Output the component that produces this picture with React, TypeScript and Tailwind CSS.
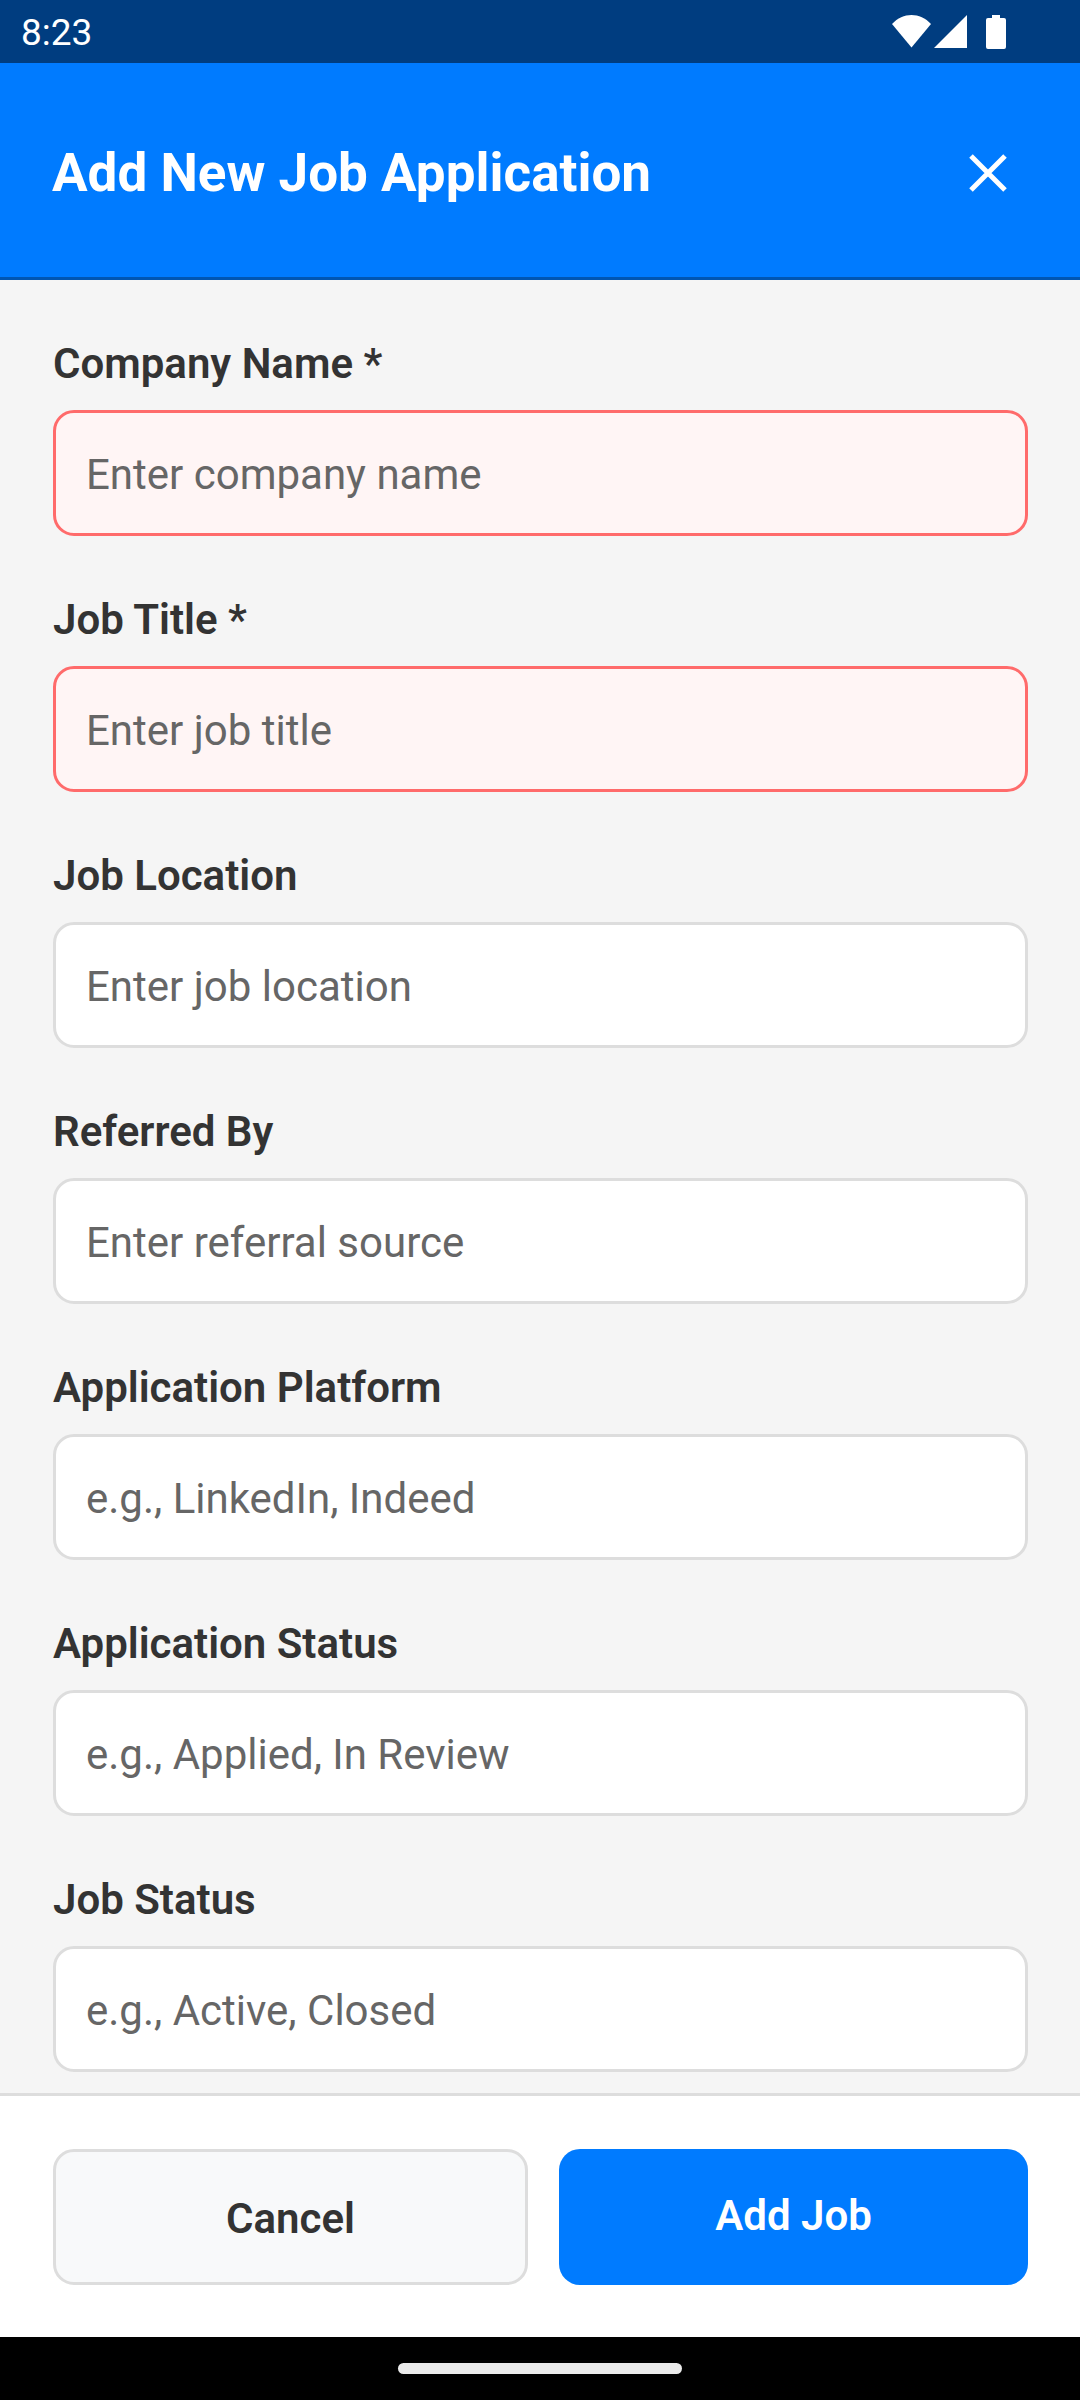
import { useState } from "react";

type Field = { id: string; label: string; placeholder: string; invalid?: boolean };

const fields: Field[] = [
  { id: "company", label: "Company Name *", placeholder: "Enter company name", invalid: true },
  { id: "title", label: "Job Title *", placeholder: "Enter job title", invalid: true },
  { id: "location", label: "Job Location", placeholder: "Enter job location" },
  { id: "referred", label: "Referred By", placeholder: "Enter referral source" },
  { id: "platform", label: "Application Platform", placeholder: "e.g., LinkedIn, Indeed" },
  { id: "appStatus", label: "Application Status", placeholder: "e.g., Applied, In Review" },
  { id: "jobStatus", label: "Job Status", placeholder: "e.g., Active, Closed" },
];

function StatusBar() {
  return (
    <div className="flex h-[63px] shrink-0 items-center justify-between bg-[#003d80] pl-[21px] pr-[74px] pt-[2px] text-white">
      <span className="text-[37px] leading-[44px]">8:23</span>
      <svg width="114" height="36" viewBox="0 0 114 36" fill="currentColor" aria-hidden="true">
        <path d="M0 9 C11 -3 28 -3 39 9 L19.5 32.5 Z" />
        <path d="M75 0 V33 H42 Z" />
        <path d="M100 0 h8 v3 h4 q2 0 2 2 v27 q0 2 -2 2 h-16 q-2 0 -2 -2 v-27 q0 -2 2 -2 h4 Z" />
      </svg>
    </div>
  );
}

function TextField({ field }: { field: Field }) {
  const [value, setValue] = useState("");
  const tone = field.invalid ? "border-[#ff6b6b] bg-[#fff5f5]" : "border-[#dddddd] bg-white";
  return (
    <div className="flex flex-col gap-[21px]">
      <label htmlFor={field.id} className="text-[42px] font-semibold leading-[50px] text-[#333333]">
        {field.label}
      </label>
      <input
        id={field.id}
        type="text"
        value={value}
        onChange={(e) => setValue(e.target.value)}
        placeholder={field.placeholder}
        className={`h-[126px] w-full rounded-[21px] border-[3px] px-[30px] pt-[3px] text-[42px] text-[#333333] outline-none placeholder:text-[#666666] ${tone}`}
      />
    </div>
  );
}

export default function App() {
  return (
    <div className="flex h-screen w-full flex-col bg-[#f5f5f5] font-[Roboto,sans-serif]">
      <StatusBar />
      <header className="flex h-[217px] shrink-0 items-center justify-between border-b-[3px] border-[#0056b3] bg-[#007bff] pl-[52px] pr-[52px] pt-[5px] text-white">
        <h1 className="text-[53px] font-bold leading-[64px]">Add New Job Application</h1>
        <button type="button" aria-label="Close" className="p-[21px]">
          <svg width="38" height="38" viewBox="0 0 38 38" stroke="currentColor" strokeWidth="5" aria-hidden="true">
            <path d="M2 2 L36 36 M36 2 L2 36" />
          </svg>
        </button>
      </header>
      <main className="flex min-h-0 flex-1 flex-col gap-[59px] overflow-hidden pl-[53px] pr-[52px] pt-[59px]">
        {fields.map((f) => (
          <TextField key={f.id} field={f} />
        ))}
      </main>
      <footer className="flex shrink-0 gap-[31px] border-t-[3px] border-[#dddddd] bg-white pb-[52px] pl-[53px] pr-[52px] pt-[53px]">
        <button type="button" className="h-[136px] flex-1 rounded-[21px] border-[3px] border-[#dddddd] bg-[#f8f9fa] pt-[3px] text-[42px] font-semibold text-[#333333]">
          Cancel
        </button>
        <button type="button" className="h-[136px] flex-1 rounded-[21px] bg-[#007bff] pb-[3px] text-[42px] font-semibold text-white">
          Add Job
        </button>
      </footer>
      <div className="flex h-[63px] shrink-0 items-center justify-center bg-black">
        <div className="h-[11px] w-[284px] rounded-full bg-[#ebebeb]" />
      </div>
    </div>
  );
}
